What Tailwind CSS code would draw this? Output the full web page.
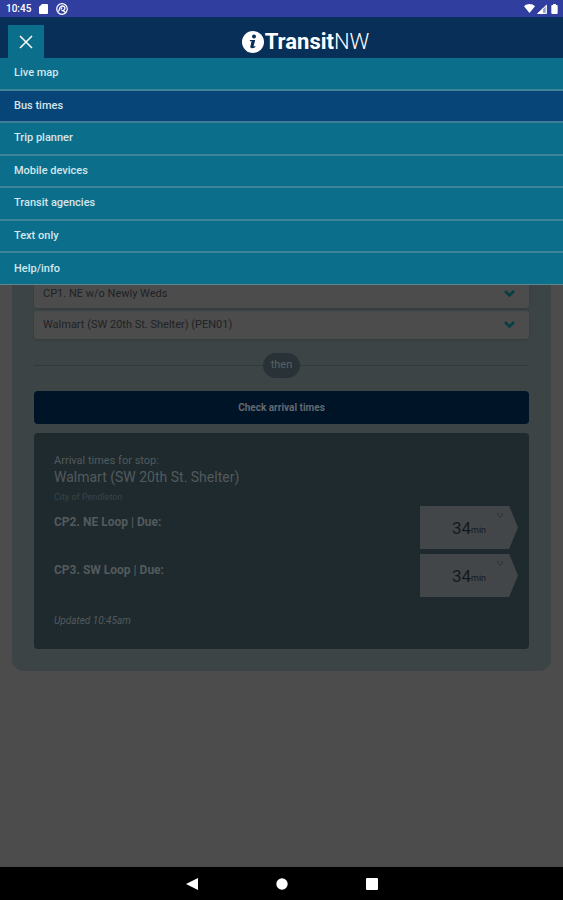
<!DOCTYPE html>
<html lang="en">
<head>
    <meta charset="UTF-8">
    <meta name="viewport" content="width=device-width, initial-scale=1.0">
    <title>TransitNW - Bus times</title>
    <script src="https://cdn.jsdelivr.net/npm/@tailwindcss/browser@4"></script>
</head>
<body class="flex min-h-screen flex-col bg-[#4c4c4c] font-['Roboto',sans-serif]">

    <!-- Device status bar -->
    <div class="flex h-[17px] items-center justify-between bg-[#303f9f] pr-[5px] pl-[6px] text-white">
        <div class="flex items-center gap-2">
            <span class="text-[10px] leading-4 font-medium">10:45</span>
            <svg class="h-[10px] w-[9px]" viewBox="0 0 9 10" fill="currentColor"><path d="M3 0h5a1 1 0 0 1 1 1v8a1 1 0 0 1-1 1H1a1 1 0 0 1-1-1V3z"/></svg>
            <svg class="size-3" viewBox="0 0 12 12" fill="none" stroke="currentColor"><circle cx="6" cy="6" r="5.300" stroke-width="1.200"/><path d="M2.500 8.500 4 4.500C5 2.500 8 2.500 8.800 4.500S7 8 5.500 7.500M6 4.500l-1 2M7 7.500l2.500 2" stroke-width="1.300"/></svg>
        </div>
        <div class="flex items-center gap-[2px]">
            <svg class="h-[9px] w-[11px]" viewBox="0 0 11 9" fill="currentColor"><path d="M5.500 9 0 2.200C3.200-.6 7.800-.6 11 2.200z"/></svg>
            <svg class="size-[10px]" viewBox="0 0 10 10"><path d="M10 0v10H0z" fill="currentColor" fill-opacity=".5"/><path d="M9.300 1.500v7.800H1.500z" fill="none" stroke="currentColor"/><path d="M6 4v6H0z" fill="currentColor"/></svg>
            <svg class="ml-[2px] h-[10px] w-[7px]" viewBox="0 0 7 11" fill="currentColor"><path d="M2 0h3v1h1a1 1 0 0 1 1 1v8a1 1 0 0 1-1 1H1a1 1 0 0 1-1-1V2a1 1 0 0 1 1-1h1z"/></svg>
        </div>
    </div>

    <header class="relative z-10 flex h-[41px] items-end bg-[#082f58] px-2">
        <button aria-label="Close menu" class="flex h-[33px] w-9 items-center justify-center bg-[#0b6e8b] text-white">
            <svg class="size-[14px]" viewBox="0 0 14 14" fill="none" stroke="currentColor" stroke-width="1.500"><path d="m1 1 12 12M13 1 1 13"/></svg>
        </button>
        <a href="#" class="flex flex-1 items-center justify-center gap-[1px] pb-1 pl-3 text-white">
            <svg class="size-[22px]" viewBox="0 0 22 22"><circle cx="11" cy="11" r="11" fill="#fff"/><circle cx="12" cy="5.500" r="2" fill="#082f58"/><path d="M8 9h5.200l-1.700 6.600 2-.5-.3 1.200c-1 .7-2.200 1-3.200 1-1.300 0-1.900-.7-1.600-2l1.200-5H7.700z" fill="#082f58"/></svg>
            <span class="text-[22px] leading-6"><span class="font-bold">Transit</span><span class="font-light">NW</span></span>
        </a>

        <!-- Menu -->
        <nav class="absolute inset-x-0 top-full flex h-[227px] flex-col text-[11px] font-medium text-[#d5e6ec]">
            <a href="#" class="flex flex-1 items-center border-b-2 border-[#3f8499] bg-[#0b6e8b] px-[14px]">Live map</a>
            <a href="#" class="flex flex-1 items-center border-b-2 border-[#3f7f99] bg-[#074578] px-[14px]">Bus times</a>
            <a href="#" class="flex flex-1 items-center border-b-2 border-[#3f8499] bg-[#0b6e8b] px-[14px]">Trip planner</a>
            <a href="#" class="flex flex-1 items-center border-b-2 border-[#3f8499] bg-[#0b6e8b] px-[14px]">Mobile devices</a>
            <a href="#" class="flex flex-1 items-center border-b-2 border-[#3f8499] bg-[#0b6e8b] px-[14px]">Transit agencies</a>
            <a href="#" class="flex flex-1 items-center border-b-2 border-[#3f8499] bg-[#0b6e8b] px-[14px]">Text only</a>
            <a href="#" class="flex flex-1 items-center border-b border-[#5c8791] bg-[#0b6e8b] px-[14px]">Help/info</a>
        </nav>
    </header>

    <!-- Page content, dimmed while the menu is open -->
    <main class="flex-1 px-3 pt-3">
        <form class="rounded-xl bg-[#3c4446] px-[22px] pt-[210px] pb-[22px]">
            <div class="grid gap-[3px]">
                <div class="relative">
                    <select aria-label="Route" class="block h-7 w-full appearance-none rounded-[3px] bg-[#4c4c4c] px-[9px] text-[11px] text-[#202224] shadow-sm">
                        <option>CP1. NE w/o Newly Weds</option>
                    </select>
                    <svg class="pointer-events-none absolute top-[10px] right-[14px] h-[7px] w-[11px]" viewBox="0 0 11 7" fill="none" stroke="#063f42" stroke-width="2.500"><path d="m1 1 4.500 4.500L10 1"/></svg>
                </div>
                <div class="relative">
                    <select aria-label="Stop" class="block h-7 w-full appearance-none rounded-[3px] bg-[#4c4c4c] px-[9px] text-[11px] text-[#202224] shadow-sm">
                        <option>Walmart (SW 20th St. Shelter) (PEN01)</option>
                    </select>
                    <svg class="pointer-events-none absolute top-[10px] right-[14px] h-[7px] w-[11px]" viewBox="0 0 11 7" fill="none" stroke="#063f42" stroke-width="2.500"><path d="m1 1 4.500 4.500L10 1"/></svg>
                </div>
            </div>

            <div class="mt-[14px] mb-[13px] flex items-center">
                <span class="h-px flex-1 bg-[#30393d]"></span>
                <span class="flex h-[25px] w-[37px] items-center justify-center rounded-full bg-[#283237] text-[11px] text-[#596165]">then</span>
                <span class="h-px flex-1 bg-[#30393d]"></span>
            </div>

            <button type="button" class="block h-[33px] w-full rounded-[4px] bg-[#001428] text-[10px] font-bold text-[#626970]">Check arrival times</button>

            <section class="mt-[9px] rounded-[4px] bg-[#1e2a2e] p-5 text-[#535a5d]">
                <h2 class="text-[11px] leading-4">Arrival times for stop:
                    <span class="block text-[14px]">Walmart (SW 20th St. Shelter)</span>
                </h2>
                <p class="mt-1 text-[9px] leading-4 text-[#394448]">City of Pendleton</p>
                <ul class="mt-px -mr-[9px] grid gap-[5px]">
                    <li class="flex h-[43px] justify-between">
                        <span class="mt-2 text-[12px] leading-4 font-bold">CP2. NE Loop | Due:</span>
                        <span class="relative flex w-[98px] items-center justify-center bg-[#434648] text-[#15191b] [clip-path:polygon(0_0,91%_0,100%_50%,91%_100%,0_100%)]">
                            <span class="text-[17px] leading-5">34</span><span class="mt-1 text-[9px] leading-4">min</span>
                            <svg class="absolute top-[6px] right-[15px] size-2" viewBox="0 0 8 8" fill="none" stroke="#2c3234"><path d="M1 1v1M3 1v2l2 2M7 1v3L5 6"/></svg>
                        </span>
                    </li>
                    <li class="flex h-[43px] justify-between">
                        <span class="mt-2 text-[12px] leading-4 font-bold">CP3. SW Loop | Due:</span>
                        <span class="relative flex w-[98px] items-center justify-center bg-[#434648] text-[#15191b] [clip-path:polygon(0_0,91%_0,100%_50%,91%_100%,0_100%)]">
                            <span class="text-[17px] leading-5">34</span><span class="mt-1 text-[9px] leading-4">min</span>
                            <svg class="absolute top-[6px] right-[15px] size-2" viewBox="0 0 8 8" fill="none" stroke="#2c3234"><path d="M1 1v1M3 1v2l2 2M7 1v3L5 6"/></svg>
                        </span>
                    </li>
                </ul>
                <p class="mt-4 text-[10px] leading-4 italic">Updated 10:45am</p>
            </section>
        </form>
    </main>

    <!-- Device navigation bar -->
    <div class="flex h-[33px] items-center justify-center gap-[78px] bg-black text-white">
        <button aria-label="Back"><svg class="size-3" viewBox="0 0 12 12" fill="currentColor"><path d="M12 0v12L0 6z"/></svg></button>
        <button aria-label="Home"><svg class="size-3" viewBox="0 0 12 12" fill="currentColor"><circle cx="6" cy="6" r="5.700"/></svg></button>
        <button aria-label="Overview"><svg class="size-3" viewBox="0 0 12 12" fill="currentColor"><rect width="12" height="12" rx="1"/></svg></button>
    </div>

</body>
</html>
